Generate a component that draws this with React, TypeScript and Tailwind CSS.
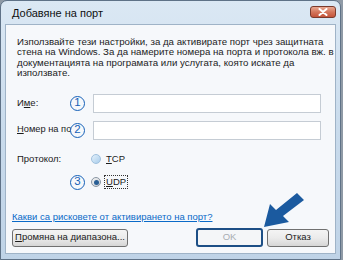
import React from "react";

const Num = ({ n }: { n: string }) => (
  <span className="relative z-10 flex h-[15px] w-[15px] shrink-0 items-center justify-center rounded-full border-[1.5px] border-[#1560b8] bg-[#f6f8fb] text-[11.5px] leading-none text-[#1560b8]">
    {n}
  </span>
);

const Radio = ({ checked }: { checked?: boolean }) => (
  <span
    className={
      "flex h-[10px] w-[10px] shrink-0 items-center justify-center rounded-full border " +
      (checked
        ? "border-[#8a96a3] bg-gradient-to-br from-[#f4f4f4] to-[#c9ced4]"
        : "border-[#9fc0de] bg-gradient-to-br from-[#e4f1fb] to-[#a9cdeb]")
    }
  >
    {checked && <span className="h-[5px] w-[5px] rounded-full bg-[#2a5f95]" />}
  </span>
);

export default function App() {
  return (
    <div
      className="relative h-[260px] w-[343px] overflow-hidden bg-[#8f9aa6]"
      style={{ fontFamily: '"Liberation Sans", Arial, sans-serif' }}
    >
      <div className="flex h-[260px] w-[341px] flex-col rounded-t-[7px] border border-[#5f7287] bg-gradient-to-b from-[#dbe8f4] via-[#c9dbec] to-[#bfd3e7]">
        {/* Title bar */}
        <div className="flex h-[23px] shrink-0 items-center justify-between pl-[11px] pr-[4px]">
          <span className="pt-[2px] text-[11px] text-[#101010]">Добавяне на порт</span>
          <span className="mt-[-2px] flex h-[12px] w-[26px] items-center justify-center rounded-[3px] border border-[#7a3a2c] bg-gradient-to-b from-[#e8a993] via-[#d4765c] to-[#c4533a]">
            <svg width="10" height="8" viewBox="0 0 10 8">
              <path d="M1.5 1 L8.5 7 M8.5 1 L1.5 7" stroke="#fff" strokeWidth="2" strokeLinecap="round" />
            </svg>
          </span>
        </div>
        {/* Content */}
        <div className="mx-[4px] flex flex-1 flex-col border border-[#9fb3c7] bg-[#f6f8fb] text-[#1b1b1b]">
          <p className="whitespace-nowrap pl-[11px] pr-[4px] pt-[12px] text-[9.7px] leading-[10.4px]">
            Използвайте тези настройки, за да активирате порт чрез защитната
            <br />
            стена на Windows. За да намерите номера на порта и протокола вж. в
            <br />
            документацията на програмата или услугата, която искате да
            <br />
            използвате.
          </p>
          <div className="mt-[15px] flex flex-col pl-[11px] pr-[14px] text-[9.5px]">
            <div className="flex h-[19px] items-center">
              <span className="w-[53px] shrink-0">
                И<span className="underline">м</span>е:
              </span>
              <Num n="1" />
              <div className="ml-[8px] h-[19px] flex-1 border border-[#c5ccd4] bg-white" />
            </div>
            <div className="mt-[8px] flex h-[19px] items-center">
              <span className="w-[54px] shrink-0 whitespace-nowrap text-[9.3px]">
                <span className="underline">Н</span>омер на порт:
              </span>
              <span className="-ml-[1px]">
                <Num n="2" />
              </span>
              <div className="ml-[8px] h-[19px] flex-1 border border-[#c5ccd4] bg-white" />
            </div>
            <div className="mt-[12px] flex h-[14px] items-center">
              <span className="w-[74px] shrink-0">Протокол:</span>
              <Radio />
              <span className="ml-[5px]">
                <span className="underline">T</span>CP
              </span>
            </div>
            <div className="mt-[9px] flex h-[15px] items-center">
              <span className="w-[53px] shrink-0" />
              <Num n="3" />
              <span className="ml-[6px]">
                <Radio checked />
              </span>
              <span className="ml-[3px] border border-dotted border-[#333] px-[1px] leading-[12px]">
                <span className="underline">U</span>DP
              </span>
            </div>
          </div>
          <div className="mt-auto flex flex-col px-[6px] pb-[6px]">
            <span className="text-[9.5px] text-[#0a6ac8] underline">
              Какви са рисковете от активирането на порт?
            </span>
            <div className="mt-[4px] flex items-center text-[9.5px]">
              <button className="flex h-[18px] w-[116px] items-center justify-center rounded-[3px] border border-[#707070] bg-gradient-to-b from-[#f4f4f4] via-[#ebebeb] to-[#d6d6d6]">
                <span>
                  <span className="underline">П</span>ромяна на диапазона...
                </span>
              </button>
              <button className="ml-auto flex h-[19px] w-[67px] items-center justify-center rounded-[3px] border-2 border-[#1d4f86] bg-[#f4f6f8] text-[#a8adb3]">
                OK
              </button>
              <button className="ml-[4px] flex h-[18px] w-[62px] items-center justify-center rounded-[3px] border border-[#707070] bg-gradient-to-b from-[#f4f4f4] via-[#ebebeb] to-[#d6d6d6]">
                Отказ
              </button>
            </div>
          </div>
        </div>
        <div className="h-[5px] shrink-0" />
      </div>
      <svg className="pointer-events-none absolute left-0 top-0" width="343" height="260">
        <polygon
          points="264,227 270,204 276,210 297,193 304,200 283,216 289,222"
          fill="#1b5a9f"
        />
      </svg>
    </div>
  );
}
